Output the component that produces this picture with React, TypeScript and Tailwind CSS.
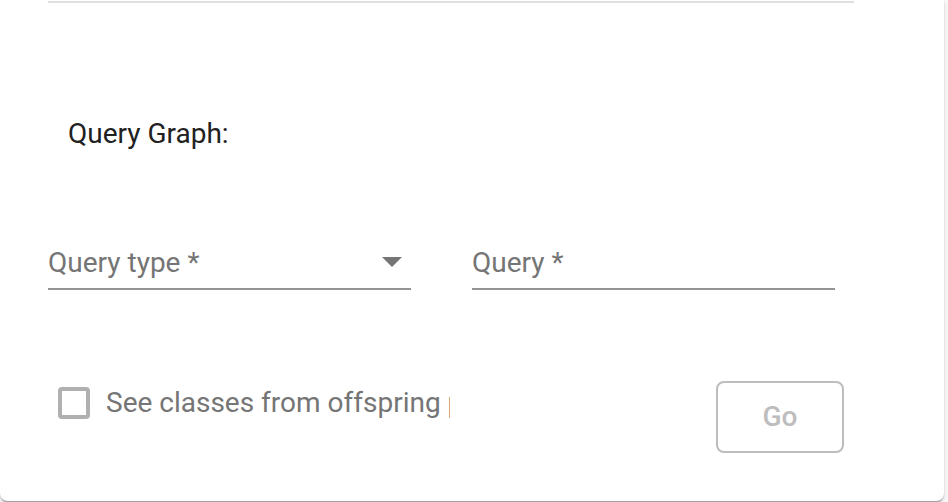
import React from "react";

function Heading() {
  return <h2 className="mt-[113px] pl-[68px] text-[28px] leading-9 text-[#212121]">Query Graph:</h2>;
}

function QueryTypeField() {
  return (
    <div className="relative min-w-0 flex-1">
      <select
        aria-label="Query type"
        required
        defaultValue=""
        className="block h-[46px] w-full appearance-none rounded-none border-b-2 border-[#949494] bg-transparent pb-1.5 text-[28px] leading-9 text-[#757575] outline-none"
      >
        <option value="">Query type *</option>
      </select>
      <svg
        aria-hidden="true"
        viewBox="0 0 20 10"
        className="pointer-events-none absolute top-[13px] right-[9px] h-[10px] w-5 fill-[#757575]"
      >
        <path d="M0 0h20L10 10z" />
      </svg>
    </div>
  );
}

function QueryField() {
  return (
    <input
      type="text"
      aria-label="Query"
      required
      placeholder="Query *"
      className="block h-[46px] min-w-0 flex-1 border-b-2 border-[#949494] bg-transparent pb-2 text-[28px] leading-9 text-[#212121] outline-none placeholder:text-[#757575]"
    />
  );
}

export default function App() {
  return (
    <div className="overflow-hidden bg-[#fafafa] pb-px font-['Roboto','Noto_Sans',sans-serif]">
      <form
        onSubmit={(e) => e.preventDefault()}
        className="mr-1 rounded-b-lg bg-white pt-px pb-12 shadow-[0_4px_2px_-2px_rgba(0,0,0,0.2),0_2px_2px_0_rgba(0,0,0,0.14),0_2px_6px_0_rgba(0,0,0,0.12)]"
      >
        <hr className="mr-[90px] ml-12 h-0.5 border-0 bg-[#e0e0e0]" />
        <Heading />
        <div className="mt-[92px] flex gap-[61px] pr-[109px] pl-12">
          <QueryTypeField />
          <QueryField />
        </div>
        <div className="mt-[91px] flex items-start justify-between pr-[100px] pl-[58px]">
          <label className="flex items-center gap-4 pt-1">
            <input
              type="checkbox"
              className="size-8 shrink-0 appearance-none rounded border-4 border-[#b0b0b0] checked:bg-[#b0b0b0]"
            />
            <span className="w-[344px] overflow-hidden text-[28px] leading-9 whitespace-nowrap text-[#757575]">
              See classes from offspring p
            </span>
          </label>
          <button
            type="submit"
            disabled
            className="h-[72px] w-32 rounded-lg border-2 border-[#bdbdbd] text-[28px] leading-9 font-medium text-[#bdbdbd]"
          >
            Go
          </button>
        </div>
      </form>
    </div>
  );
}
